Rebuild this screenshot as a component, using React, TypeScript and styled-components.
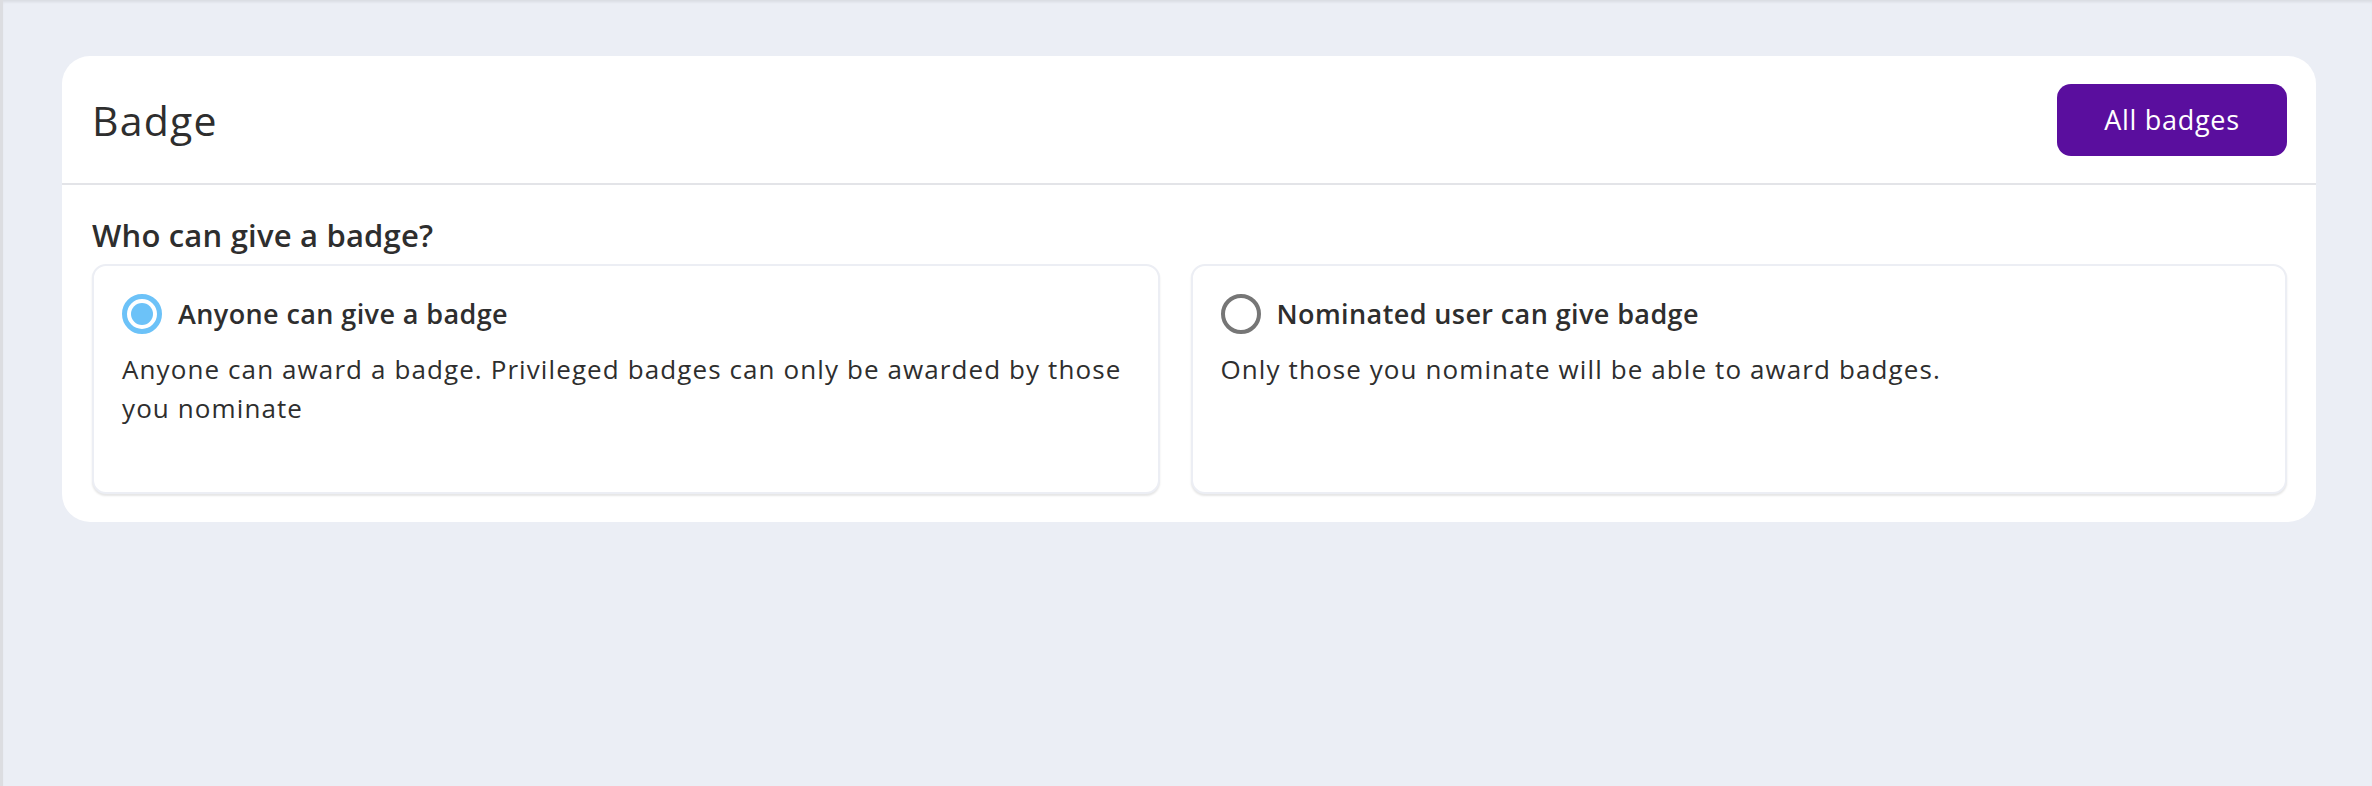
import React, { useState } from "react";
import styled, { createGlobalStyle } from "styled-components";

const GlobalStyle = createGlobalStyle`
  html, body {
    margin: 0;
    padding: 0;
    background: #ebeef5;
  }
  body {
    font-family: "Open Sans", "Noto Sans", Arial, sans-serif;
    color: #2e2e2e;
  }
  * { box-sizing: border-box; }
`;

const Page = styled.div`
  min-height: 786px;
  background: #ebeef5;
  border-left: 3px solid #dcdde1;
  box-shadow: inset 0 3px 3px -1px rgba(0, 0, 0, 0.08);
  padding: 56px 56px 40px 59px;
`;

const Card = styled.section`
  background: #ffffff;
  border-radius: 28px;
`;

const Header = styled.header`
  height: 129px;
  display: flex;
  align-items: center;
  justify-content: space-between;
  padding: 0 29px 0 30px;
  border-bottom: 2px solid #e3e4e8;
`;

const Title = styled.h1`
  margin: 0;
  font-size: 41px;
  font-weight: 400;
  line-height: 48px;
  letter-spacing: 1.2px;
  color: #2e2e2e;
`;

const PrimaryButton = styled.button`
  height: 72px;
  min-width: 230px;
  padding: 0 40px;
  border: none;
  border-radius: 14px;
  background: #5a0e9e;
  color: #ffffff;
  font-family: inherit;
  font-size: 27px;
  font-weight: 400;
  letter-spacing: 0.7px;
  cursor: pointer;
`;

const Body = styled.div`
  padding: 30px 29px 28px 30px;
`;

const SectionTitle = styled.h2`
  margin: 0 0 9px;
  font-size: 31px;
  font-weight: 600;
  line-height: 40px;
  letter-spacing: 0.2px;
  color: #2e2e2e;
`;

const Options = styled.div`
  display: grid;
  grid-template-columns: 1068fr 1097fr;
  gap: 31px;
`;

const OptionCard = styled.label`
  display: flex;
  flex-direction: column;
  min-height: 230px;
  padding: 28px;
  border: 2px solid #eceef4;
  border-radius: 14px;
  background: #ffffff;
  box-shadow: 0 2px 2px rgba(0, 0, 0, 0.1);
  cursor: pointer;
`;

const OptionHead = styled.div`
  display: flex;
  align-items: center;
  gap: 16px;
  height: 40px;
`;

const Radio = styled.span<{ $checked: boolean }>`
  flex: none;
  width: 40px;
  height: 40px;
  border-radius: 50%;
  border: ${(p) => (p.$checked ? "5px solid #6cc2f8" : "4px solid #767676")};
  display: flex;
  align-items: center;
  justify-content: center;
  &::after {
    content: "";
    width: 22px;
    height: 22px;
    border-radius: 50%;
    background: #6cc2f8;
    display: ${(p) => (p.$checked ? "block" : "none")};
  }
`;

const OptionTitle = styled.span`
  font-size: 27px;
  font-weight: 600;
  line-height: 40px;
  letter-spacing: 0.4px;
  color: #2e2e2e;
`;

const OptionText = styled.p`
  margin: 16px 0 0;
  font-size: 26px;
  font-weight: 400;
  line-height: 39px;
  letter-spacing: 1.1px;
  color: #2e2e2e;
`;

const HiddenInput = styled.input`
  position: absolute;
  opacity: 0;
  width: 0;
  height: 0;
`;

const options = [
  {
    id: "anyone",
    title: "Anyone can give a badge",
    text: "Anyone can award a badge. Privileged badges can only be awarded by those you nominate",
  },
  {
    id: "nominated",
    title: "Nominated user can give badge",
    text: "Only those you nominate will be able to award badges.",
  },
];

export default function App() {
  const [selected, setSelected] = useState("anyone");
  return (
    <>
      <GlobalStyle />
      <Page>
        <Card>
          <Header>
            <Title>Badge</Title>
            <PrimaryButton>All badges</PrimaryButton>
          </Header>
          <Body>
            <SectionTitle>Who can give a badge?</SectionTitle>
            <Options>
              {options.map((o) => (
                <OptionCard key={o.id}>
                  <HiddenInput
                    type="radio"
                    name="giver"
                    checked={selected === o.id}
                    onChange={() => setSelected(o.id)}
                  />
                  <OptionHead>
                    <Radio $checked={selected === o.id} />
                    <OptionTitle>{o.title}</OptionTitle>
                  </OptionHead>
                  <OptionText>{o.text}</OptionText>
                </OptionCard>
              ))}
            </Options>
          </Body>
        </Card>
      </Page>
    </>
  );
}
